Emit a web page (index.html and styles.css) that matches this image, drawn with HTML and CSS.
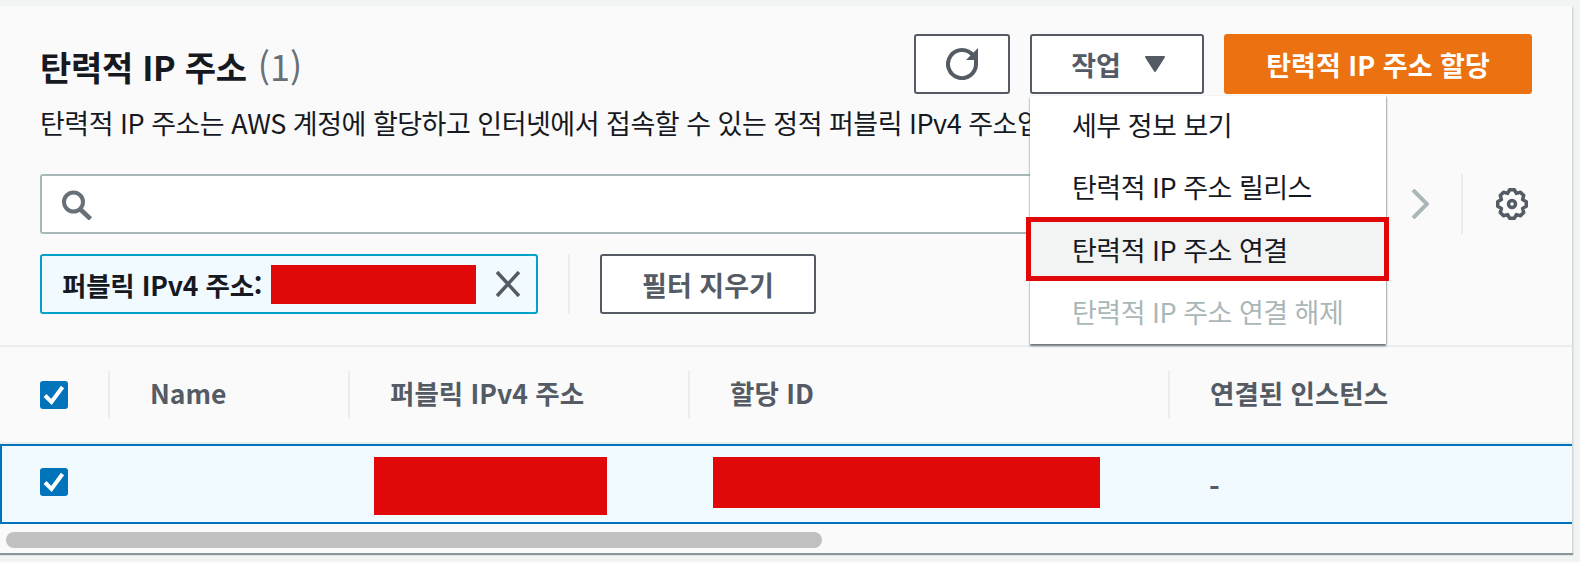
FILE: index.html
```html
<!DOCTYPE html>
<html lang="ko">
<head>
    <meta charset="UTF-8">
    <title>탄력적 IP 주소</title>
    <link rel="stylesheet" href="styles.css">
</head>
<body>
    <div class="panel">
        <div class="head">
            <div class="head-top">
                <h1 class="title">탄력적 IP 주소 <span class="count">(1)</span></h1>
                <div class="actions">
                    <button class="btn btn-refresh" aria-label="새로 고침">
                        <svg width="32" height="32" viewBox="0 0 32 32"><path d="M27.300 7.800 A14 14 0 1 0 30 16 V12" fill="none" stroke="#545b64" stroke-width="4"/><path d="M32 0 V12 H20 Z" fill="#545b64"/></svg>
                    </button>
                    <div class="dropdown">
                        <button class="btn btn-actions">작업
                            <svg width="20" height="16" viewBox="0 0 20 16"><path d="M1 1 H19 L10 15 Z" fill="#545b64" stroke="#545b64" stroke-width="2" stroke-linejoin="round"/></svg>
                        </button>
                        <ul class="menu">
                            <li class="menu-item">세부 정보 보기</li>
                            <li class="menu-item">탄력적 IP 주소 릴리스</li>
                            <li class="menu-item menu-item-marked">탄력적 IP 주소 연결</li>
                            <li class="menu-item menu-item-off">탄력적 IP 주소 연결 해제</li>
                        </ul>
                    </div>
                    <button class="btn btn-primary">탄력적 IP 주소 할당</button>
                </div>
            </div>
            <p class="desc">탄력적 IP 주소는 AWS 계정에 할당하고 인터넷에서 접속할 수 있는 정적 퍼블릭 IPv4 주소입니다.</p>
            <div class="search-row">
                <div class="search">
                    <svg width="32" height="32" viewBox="0 0 32 32"><circle cx="12.500" cy="14" r="9.500" fill="none" stroke="#687078" stroke-width="4"/><path d="M19 21 L29.500 31" stroke="#687078" stroke-width="4.500"/></svg>
                </div>
                <svg class="chevron" width="18" height="30" viewBox="0 0 18 30"><path d="M2 1 L16 15 L2 29" fill="none" stroke="#aab7b8" stroke-width="4"/></svg>
                <div class="vline"></div>
                <svg class="gear" width="32" height="32" viewBox="0 0 32 32"><path d="M13.700 1.700 H18.300 L20.400 5.400 L24.500 4.300 L27.700 7.500 L26.600 11.600 L30.300 13.700 V18.300 L26.600 20.400 L27.700 24.500 L24.500 27.700 L20.400 26.600 L18.300 30.300 H13.700 L11.600 26.600 L7.500 27.700 L4.300 24.500 L5.400 20.400 L1.700 18.300 V13.700 L5.400 11.600 L4.300 7.500 L7.500 4.300 L11.600 5.400 Z" fill="none" stroke="#545b64" stroke-width="3.500" stroke-linejoin="round"/><circle cx="16" cy="16" r="3.500" fill="none" stroke="#545b64" stroke-width="3.500"/></svg>
            </div>
            <div class="filter-row">
                <div class="chip">
                    <span class="chip-label">퍼블릭 IPv4 주소:</span>
                    <span class="redact redact-chip"></span>
                    <svg class="chip-x" width="26" height="26" viewBox="0 0 26 26"><path d="M2 1 L24 25 M24 1 L2 25" stroke="#545b64" stroke-width="3.500"/></svg>
                </div>
                <div class="vline"></div>
                <button class="btn btn-clear">필터 지우기</button>
            </div>
        </div>
        <div class="table-head">
            <div class="cell cell-check">
                <svg class="check" width="28" height="28" viewBox="0 0 28 28"><rect width="28" height="28" rx="3" fill="#0073bb"/><path d="M5 14.500 L11.500 21 L22.500 6" fill="none" stroke="#fff" stroke-width="4"/></svg>
            </div>
            <div class="cell th">Name</div>
            <div class="cell th">퍼블릭 IPv4 주소</div>
            <div class="cell th">할당 ID</div>
            <div class="cell th">연결된 인스턴스</div>
        </div>
        <div class="table-row">
            <div class="td-check">
                <svg class="check" width="28" height="28" viewBox="0 0 28 28"><rect width="28" height="28" rx="3" fill="#0073bb"/><path d="M5 14.500 L11.500 21 L22.500 6" fill="none" stroke="#fff" stroke-width="4"/></svg>
            </div>
            <div></div>
            <div class="td-ip"><span class="redact redact-ip"></span></div>
            <div class="td-id"><span class="redact redact-id"></span></div>
            <div class="td-dash">-</div>
        </div>
        <div class="scroll">
            <div class="scroll-thumb"></div>
        </div>
    </div>
</body>
</html>
```

FILE: styles.css
```css
* {
    box-sizing: border-box;
}
html, body {
    height: 562px;
    overflow: hidden;
}
body {
    margin: 0;
    padding-top: 6px;
    background-color: #f2f3f3;
    font-family: "Noto Sans CJK KR", "Noto Sans", sans-serif;
    color: #16191f;
}
.panel {
    width: 1573px;
    height: 547px;
    background-color: #fafafa;
    border-right: 1px solid #d5dbdb;
    box-shadow: 0 2px 1px #879596;
}
.head {
    height: 341px;
    padding: 28px 40px 0;
    border-bottom: 2px solid #eaeded;
}
.head-top {
    display: flex;
    justify-content: space-between;
    height: 60px;
}
.title {
    margin: 0;
    font-size: 34px;
    font-weight: 700;
    line-height: 62px;
    letter-spacing: -0.3px;
}
.count {
    margin-left: 2px;
    font-size: 36px;
    font-weight: 400;
    letter-spacing: 0;
    color: #687078;
}
.actions {
    display: flex;
    gap: 20px;
}
.btn {
    height: 60px;
    border: 2px solid #545b64;
    border-radius: 3px;
    background-color: #fff;
    color: #545b64;
    font-family: inherit;
    font-size: 27px;
    font-weight: 700;
    padding: 0;
    display: flex;
    align-items: center;
    justify-content: center;
}
.btn-refresh {
    width: 96px;
}
.btn-actions {
    width: 174px;
    gap: 24px;
    padding-left: 2px;
}
.btn-primary {
    width: 308px;
    background-color: #ec7211;
    border-color: #ec7211;
    color: #fff;
}
.dropdown {
    position: relative;
}
.menu {
    position: absolute;
    top: 62px;
    left: 0;
    z-index: 2;
    width: 356px;
    height: 248px;
    margin: 0;
    padding: 0;
    list-style: none;
    background-color: #fff;
    box-shadow: 0 2px 2px #687078, 1px 0 1px #d5dbdb;
}
.menu-item {
    height: 62px;
    padding-left: 42px;
    font-size: 27px;
    line-height: 58px;
    letter-spacing: -0.5px;
}
.menu-item-marked {
    height: 64px;
    margin: -3px -3px 1px -4px;
    padding-left: 41px;
    border: 5px solid #e00808;
    background-color: #f2f3f3;
    line-height: 55px;
}
.menu-item-off {
    color: #aab7b8;
    line-height: 60px;
}
.desc {
    margin: 0;
    height: 80px;
    font-size: 27px;
    line-height: 58px;
    letter-spacing: -0.5px;
    white-space: nowrap;
}
.search-row {
    display: flex;
    align-items: center;
    height: 60px;
}
.search {
    width: 1340px;
    height: 60px;
    border: 2px solid #aab7b8;
    border-radius: 3px;
    background-color: #fff;
    padding-left: 19px;
    display: flex;
    align-items: center;
}
.chevron {
    margin-left: 31px;
}
.vline {
    width: 2px;
    height: 60px;
    background-color: #eaeded;
}
.search-row .vline {
    margin-left: 32px;
}
.gear {
    margin-left: 33px;
}
.filter-row {
    display: flex;
    align-items: center;
    margin-top: 20px;
    height: 60px;
}
.chip {
    width: 498px;
    height: 60px;
    border: 2px solid #00a1c9;
    border-radius: 3px;
    background-color: #f1faff;
    display: flex;
    align-items: center;
    padding-left: 20px;
}
.chip-label {
    width: 209px;
    font-size: 26.5px;
    font-weight: 700;
    letter-spacing: -0.2px;
    white-space: nowrap;
}
.redact {
    display: block;
    background-color: #e00808;
}
.redact-chip {
    width: 205px;
    height: 39px;
}
.chip-x {
    margin-left: 19px;
}
.filter-row .vline {
    margin-left: 30px;
}
.btn-clear {
    width: 216px;
    margin-left: 30px;
}
.table-head {
    display: grid;
    grid-template-columns: 108px 240px 340px 480px 1fr;
    height: 97px;
    align-items: center;
    border-bottom: 2px solid #eaeded;
}
.cell {
    height: 48px;
    display: flex;
    align-items: center;
}
.cell-check {
    padding-left: 40px;
}
.th {
    border-left: 2px solid #eaeded;
    padding: 0 0 4px 40px;
    font-size: 26.5px;
    font-weight: 700;
    color: #545b64;
}
.table-row {
    display: grid;
    grid-template-columns: 107px 240px 340px 480px 1fr;
    width: 1572px;
    height: 80px;
    background-color: #f1faff;
    border: 2px solid #0073bb;
    border-right: 0;
}
.td-check {
    padding: 22px 0 0 38px;
}
.td-ip {
    padding: 11px 0 0 25px;
}
.td-id {
    padding: 11px 0 0 24px;
}
.redact-ip {
    width: 233px;
    height: 58px;
}
.redact-id {
    width: 387px;
    height: 51px;
}
.td-dash {
    padding-left: 40px;
    font-size: 29px;
    font-weight: 700;
    line-height: 80px;
    color: #545b64;
}
.scroll {
    padding: 8px 0 0 6px;
}
.scroll-thumb {
    width: 816px;
    height: 16px;
    border-radius: 8px;
    background-color: #c0c0c0;
}
```
